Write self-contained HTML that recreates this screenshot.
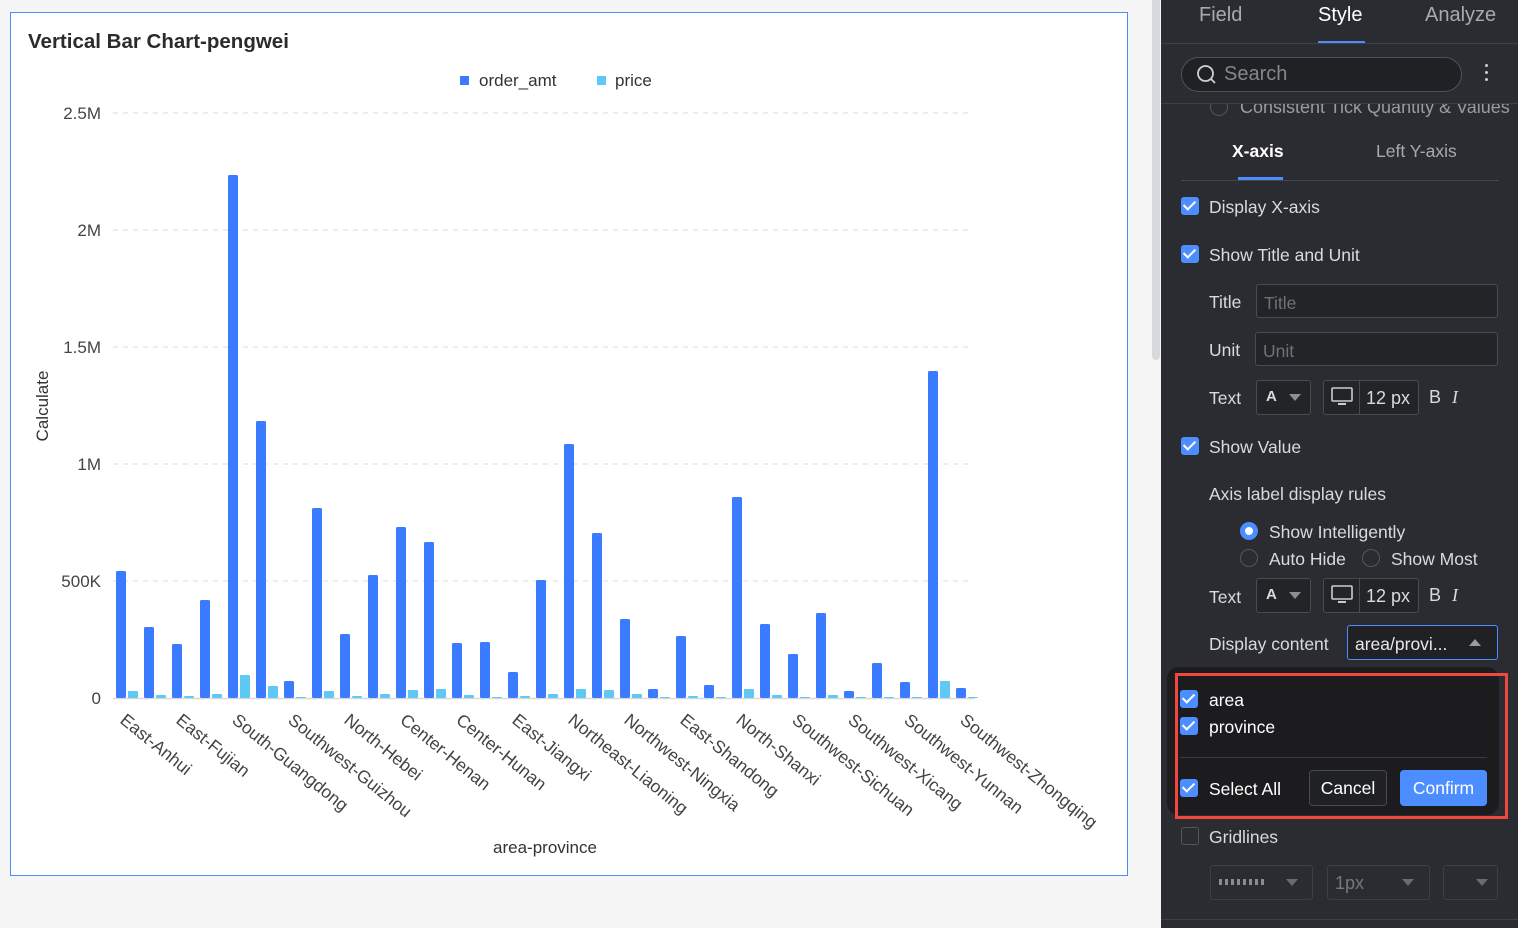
<!DOCTYPE html>
<html><head><meta charset="utf-8"><style>
*{box-sizing:border-box;margin:0;padding:0}
body{width:1518px;height:928px;background:#f5f5f6;font-family:"Liberation Sans",Arial,sans-serif;position:relative;overflow:hidden}
.card{position:absolute;left:10px;top:12px;width:1118px;height:864px;background:#fff;border:1.5px solid #4f8cf7}
.scroll{position:absolute;left:1152px;top:0;width:8px;height:360px;background:#d8d9dd;border-radius:0 0 4px 4px}
.panel{position:absolute;left:1161px;top:0;width:357px;height:928px;background:#2b2c31;color:#d9dadc;font-size:17.5px}
.a{position:absolute;white-space:nowrap}
.cb{position:absolute;width:18px;height:18px;border-radius:3px;background:#4c8dff}
.cb:after{content:"";position:absolute;left:5px;top:1px;width:5px;height:10px;border:solid #fff;border-width:0 2.5px 2.5px 0;transform:rotate(45deg)}
.box{position:absolute;border:1px solid #4a4b50;border-radius:3px;background:#232428}
.rad{position:absolute;width:18px;height:18px;border-radius:50%;border:1.5px solid #55565b}
.tri{position:absolute;width:0;height:0;border-left:6px solid transparent;border-right:6px solid transparent;border-top:7px solid #8d8e93}
</style></head><body>
<div class="card"></div>
<div class="a" style="left:28px;top:30px;font-size:20.5px;font-weight:bold;color:#2b2b2b">Vertical Bar Chart-pengwei</div>
<svg style="position:absolute;left:0;top:0" width="1150" height="928" font-family="Liberation Sans, Arial, sans-serif">
<rect x="460" y="76" width="9" height="9" fill="#3b7bff"/><text x="479" y="86" font-size="17" fill="#333">order_amt</text>
<rect x="597" y="76" width="9" height="9" fill="#5fc8f5"/><text x="615" y="86" font-size="17" fill="#333">price</text>
<g stroke="#e2e2e2" stroke-dasharray="5,5" stroke-width="1.2">
<line x1="113" y1="113" x2="972" y2="113"/><line x1="113" y1="230" x2="972" y2="230"/><line x1="113" y1="347" x2="972" y2="347"/><line x1="113" y1="464" x2="972" y2="464"/><line x1="113" y1="581" x2="972" y2="581"/></g>
<line x1="113" y1="698.5" x2="975" y2="698.5" stroke="#d9d9d9" stroke-width="1.5"/>
<g font-size="17" fill="#444" text-anchor="end">
<text x="101" y="119">2.5M</text><text x="101" y="236">2M</text><text x="101" y="353">1.5M</text><text x="101" y="470">1M</text><text x="101" y="587">500K</text><text x="101" y="704">0</text></g>
<text transform="translate(48,406) rotate(-90)" font-size="17" fill="#333" text-anchor="middle">Calculate</text>
<text x="545" y="853" font-size="17" fill="#333" text-anchor="middle">area-province</text>
<g id="bars"></g>
<g font-size="17.5" fill="#444" id="labs"></g>
</svg>
<script>
var bt=[571,627,644,600,175,421,681,508,634,575,527,542,643,642,672,580,444,533,619,689,636,685,497,624,654,613,691,663,682,371,688];
var ct=[691,695,696,694,675,686,697,691,696,694,690,689,695,697,696,694,689,690,694,697,696,697,689,695,697,695,697,697,697,681,697];
var s='';for(var i=0;i<31;i++){var x=116+28*i;s+='<rect x="'+x+'" y="'+bt[i]+'" width="10" height="'+(698-bt[i])+'" rx="1.5" fill="#3b7bff"/>';s+='<rect x="'+(x+12)+'" y="'+ct[i]+'" width="10" height="'+(698-ct[i])+'" rx="1" fill="#5fc8f5"/>';}
document.getElementById('bars').innerHTML=s;
var L=["East-Anhui","East-Fujian","South-Guangdong","Southwest-Guizhou","North-Hebei","Center-Henan","Center-Hunan","East-Jiangxi","Northeast-Liaoning","Northwest-Ningxia","East-Shandong","North-Shanxi","Southwest-Sichuan","Southwest-Xicang","Southwest-Yunnan","Southwest-Zhongqing"];
var t='';for(var k=0;k<16;k++){var x=119+56*k;t+='<text transform="translate('+x+',722) rotate(39)">'+L[k]+'</text>';}
document.getElementById('labs').innerHTML=t;
</script>
<div class="scroll"></div>
<div class="panel">
<div class="a" style="left:38px;top:4px;font-size:20px;color:#a9aaae">Field</div>
<div class="a" style="left:157px;top:4px;font-size:20px;color:#fff">Style</div>
<div class="a" style="left:264px;top:4px;font-size:20px;color:#a9aaae">Analyze</div>
<div class="a" style="left:157px;top:41px;width:47px;height:3px;background:#4c8dff"></div>
<div class="a" style="left:0;top:43px;width:357px;height:1px;background:#3f4045"></div>
<div class="a" style="left:20px;top:57px;width:281px;height:35px;border:1px solid #505156;border-radius:18px;background:#202125"></div>
<svg class="a" style="left:35px;top:64px" width="22" height="22"><circle cx="9.5" cy="9.5" r="7.5" stroke="#d0d0d0" stroke-width="1.8" fill="none"/><line x1="15" y1="15" x2="19" y2="19" stroke="#d0d0d0" stroke-width="1.8"/></svg>
<div class="a" style="left:63px;top:63px;font-size:20px;color:#85868b">Search</div>
<div class="a" style="left:324px;top:64px;width:3px;height:3px;background:#ccc;border-radius:2px;box-shadow:0 7px #ccc,0 14px #ccc"></div>
<div class="a" style="left:0;top:103px;width:357px;height:1px;background:#3f4045"></div>
<div class="a" style="left:0;top:104px;width:357px;height:14px;overflow:hidden"><div class="rad" style="left:49px;top:-6px"></div><div class="a" style="left:79px;top:-7px;color:#9a9ba0;font-size:18px">Consistent Tick Quantity &amp; Values</div></div>
<div class="a" style="left:71px;top:141px;font-weight:bold;color:#fff">X-axis</div>
<div class="a" style="left:215px;top:141px;color:#a9aaae">Left Y-axis</div>
<div class="a" style="left:77px;top:177px;width:45px;height:3px;background:#4c8dff"></div>
<div class="a" style="left:20px;top:180px;width:318px;height:1px;background:#45464b"></div>
<div class="cb" style="left:20px;top:197px"></div><div class="a" style="left:48px;top:197px">Display X-axis</div>
<div class="cb" style="left:20px;top:245px"></div><div class="a" style="left:48px;top:245px">Show Title and Unit</div>
<div class="a" style="left:48px;top:292px">Title</div><div class="box" style="left:95px;top:284px;width:242px;height:34px"></div><div class="a" style="left:103px;top:293px;color:#707176">Title</div>
<div class="a" style="left:48px;top:340px">Unit</div><div class="box" style="left:94px;top:332px;width:243px;height:34px"></div><div class="a" style="left:102px;top:341px;color:#707176">Unit</div>
<div class="a" style="left:48px;top:388px">Text</div>
<div class="box" style="left:95px;top:380px;width:55px;height:35px"></div><div class="a" style="left:105px;top:388px;font-size:15px;font-weight:bold">A</div><div class="tri" style="left:128px;top:394px"></div>
<div class="box" style="left:162px;top:380px;width:96px;height:35px"></div><div class="a" style="left:198px;top:380px;width:1px;height:35px;background:#4a4b50"></div>
<svg class="a" style="left:170px;top:387px" width="22" height="20"><rect x="1" y="1" width="20" height="13" rx="1" stroke="#ccc" stroke-width="1.6" fill="none"/><rect x="7" y="16" width="8" height="2" fill="#ccc"/></svg>
<div class="a" style="left:205px;top:388px;font-size:18px">12 px</div>
<div class="a" style="left:268px;top:387px;font-size:18px">B</div><div class="a" style="left:291px;top:387px;font-size:18px;font-style:italic;font-family:'Liberation Serif',serif">I</div>
<div class="cb" style="left:20px;top:437px"></div><div class="a" style="left:48px;top:437px">Show Value</div>
<div class="a" style="left:48px;top:484px">Axis label display rules</div>
<div class="rad" style="left:79px;top:522px;border:5px solid #4c8dff;background:#fff"></div><div class="a" style="left:108px;top:522px">Show Intelligently</div>
<div class="rad" style="left:79px;top:549px"></div><div class="a" style="left:108px;top:549px">Auto Hide</div>
<div class="rad" style="left:201px;top:549px"></div><div class="a" style="left:230px;top:549px">Show Most</div>
<div class="a" style="left:48px;top:587px">Text</div>
<div class="box" style="left:95px;top:578px;width:55px;height:35px"></div><div class="a" style="left:105px;top:586px;font-size:15px;font-weight:bold">A</div><div class="tri" style="left:128px;top:592px"></div>
<div class="box" style="left:162px;top:578px;width:96px;height:35px"></div><div class="a" style="left:198px;top:578px;width:1px;height:35px;background:#4a4b50"></div>
<svg class="a" style="left:170px;top:585px" width="22" height="20"><rect x="1" y="1" width="20" height="13" rx="1" stroke="#ccc" stroke-width="1.6" fill="none"/><rect x="7" y="16" width="8" height="2" fill="#ccc"/></svg>
<div class="a" style="left:205px;top:586px;font-size:18px">12 px</div>
<div class="a" style="left:268px;top:585px;font-size:18px">B</div><div class="a" style="left:291px;top:585px;font-size:18px;font-style:italic;font-family:'Liberation Serif',serif">I</div>
<div class="a" style="left:48px;top:634px">Display content</div>
<div class="box" style="left:186px;top:625px;width:151px;height:35px;border-color:#4c8dff;background:#202125"></div><div class="a" style="left:194px;top:634px;color:#e8e8e8">area/provi...</div>
<div class="a" style="left:308px;top:639px;border-left:6px solid transparent;border-right:6px solid transparent;border-bottom:7px solid #9a9ba0"></div>
<div class="a" style="left:6px;top:667px;width:332px;height:148px;background:#1c1c1f;border-radius:12px"></div>
<div class="a" style="left:14px;top:673px;width:333px;height:146px;border:3px solid #f0483e"></div>
<div class="cb" style="left:19px;top:690px"></div><div class="a" style="left:48px;top:690px;color:#fff">area</div>
<div class="cb" style="left:19px;top:717px"></div><div class="a" style="left:48px;top:717px;color:#fff">province</div>
<div class="a" style="left:19px;top:757px;width:307px;height:1px;background:#3a3b40"></div>
<div class="cb" style="left:19px;top:779px"></div><div class="a" style="left:48px;top:779px;color:#fff">Select All</div>
<div class="a" style="left:148px;top:770px;width:78px;height:36px;border:1px solid #4a4b50;border-radius:4px;background:#202125;color:#fff;text-align:center;line-height:34px">Cancel</div>
<div class="a" style="left:239px;top:770px;width:87px;height:36px;border-radius:4px;background:#4c8dff;color:#fff;text-align:center;line-height:36px">Confirm</div>
<div class="a" style="left:20px;top:827px;width:18px;height:18px;border:1.5px solid #55565b;border-radius:3px"></div><div class="a" style="left:48px;top:827px">Gridlines</div>
<div class="a" style="left:49px;top:865px;width:103px;height:35px;border:1px solid #3e3f44;border-radius:3px"></div>
<div class="a" style="left:58px;top:879px;width:45px;height:6px;background:repeating-linear-gradient(90deg,#8a8b90 0 3px,transparent 3px 6px)"></div><div class="tri" style="left:125px;top:879px;border-top-color:#6a6b70"></div>
<div class="a" style="left:166px;top:865px;width:103px;height:35px;border:1px solid #3e3f44;border-radius:3px"></div><div class="a" style="left:174px;top:873px;color:#77787d;font-size:18px">1px</div><div class="tri" style="left:241px;top:879px;border-top-color:#6a6b70"></div>
<div class="a" style="left:282px;top:865px;width:55px;height:35px;border:1px solid #3e3f44;border-radius:3px"></div><div class="tri" style="left:315px;top:879px;border-top-color:#6a6b70"></div>
<div class="a" style="left:0;top:919px;width:357px;height:1px;background:#3f4045"></div>
</div>
</body></html>
